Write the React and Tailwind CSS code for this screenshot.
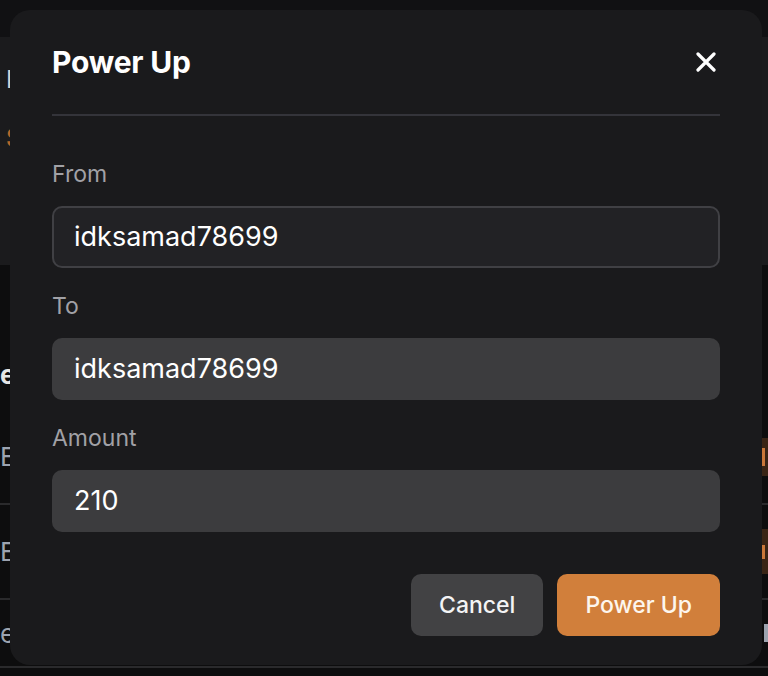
import React, { useState } from 'react';

const fields = [
  { label: 'From', value: 'idksamad78699', editable: true },
  { label: 'To', value: 'idksamad78699', editable: false },
  { label: 'Amount', value: '210', editable: false },
];

function CloseIcon() {
  return (
    <svg width="20" height="20" viewBox="0 0 20 20" fill="none">
      <path d="M2 2l16 16M18 2L2 18" stroke="white" strokeWidth="3.2" strokeLinecap="round" />
    </svg>
  );
}

function BackgroundPage() {
  return (
    <div className="flex h-full flex-col">
      <div className="h-[37px] bg-[#111113]" />
      <div className="h-[228px] bg-[#1b1b1d] pl-[6px] pt-[28px]">
        <div className="text-[24px] leading-[30px] text-[#d4d4d8]">I</div>
        <div className="mt-[28px] text-[26px] font-semibold leading-[30px] text-[#b5662b]">S</div>
      </div>
      <div className="flex-1 bg-[#0d0d0e]">
        <div className="pt-[93px] text-[26px] font-bold leading-[34px] text-[#e5e5e5]">e</div>
        <div className="mt-[18px] flex h-[95px] items-center justify-between border-b-2 border-[#2a2a2c]">
          <span className="text-[26px] text-[#9ca3af]">E</span>
          <span className="flex h-[38px] w-[6px] items-center bg-[#3a2516]">
            <span className="h-[18px] w-[3px] bg-[#c9773a]" />
          </span>
        </div>
        <div className="flex h-[95px] items-center justify-between border-b-2 border-[#2a2a2c]">
          <span className="text-[26px] text-[#9ca3af]">E</span>
          <span className="flex h-[45px] w-[6px] items-center bg-[#3a2516]">
            <span className="h-[14px] w-[3px] bg-[#c9773a]" />
          </span>
        </div>
        <div className="flex h-[68px] items-center justify-between border-b-2 border-[#2a2a2c]">
          <span className="text-[26px] text-[#9ca3af]">e</span>
          <span className="h-[18px] w-[4px] bg-[#9ca3af]" />
        </div>
      </div>
    </div>
  );
}

export default function App() {
  const [amount, setAmount] = useState('210');

  return (
    <div className="relative h-[676px] w-[768px] overflow-hidden bg-[#0d0d0e] font-['Inter','Liberation_Sans',sans-serif]">
      <BackgroundPage />

      <div className="absolute left-[10px] top-[10px] flex h-[655px] w-[752px] flex-col rounded-[20px] bg-[#1a1a1c] px-[42px]">
        <div className="flex h-[104px] items-center justify-between">
          <h2 className="text-[30px] font-bold tracking-[-0.2px] text-white">Power Up</h2>
          <button className="mr-[-1px] flex h-[30px] w-[30px] items-center justify-center">
            <CloseIcon />
          </button>
        </div>
        <div className="h-[2px] bg-[#34343a]" />

        <div className="mt-[44px] flex flex-col">
          {fields.map((f, i) => (
            <div key={f.label} className={i > 0 ? 'mt-[24px]' : ''}>
              <div className="text-[23px] leading-[28px] text-[#a1a1a6]">{f.label}</div>
              {f.editable ? (
                <div className="mt-[18px] flex h-[62px] items-center rounded-[10px] border-2 border-[#404044] bg-[#222225] px-[20px] text-[27px] text-white">
                  {f.value}
                </div>
              ) : (
                <div className="mt-[18px] flex h-[62px] items-center rounded-[10px] bg-[#3c3c3e] px-[22px] text-[27px] text-white">
                  {f.label === 'Amount' ? amount : f.value}
                </div>
              )}
            </div>
          ))}
        </div>

        <div className="mt-[42px] flex justify-end gap-[14px]">
          <button className="h-[62px] rounded-[10px] bg-[#424244] px-[28px] text-[23px] font-medium text-[#f4f4f5]">
            Cancel
          </button>
          <button
            onClick={() => setAmount(amount)}
            className="h-[62px] rounded-[10px] bg-[#d17f3b] px-[28px] text-[23px] font-medium text-[#fdf6ee]"
          >
            Power Up
          </button>
        </div>
      </div>
    </div>
  );
}
